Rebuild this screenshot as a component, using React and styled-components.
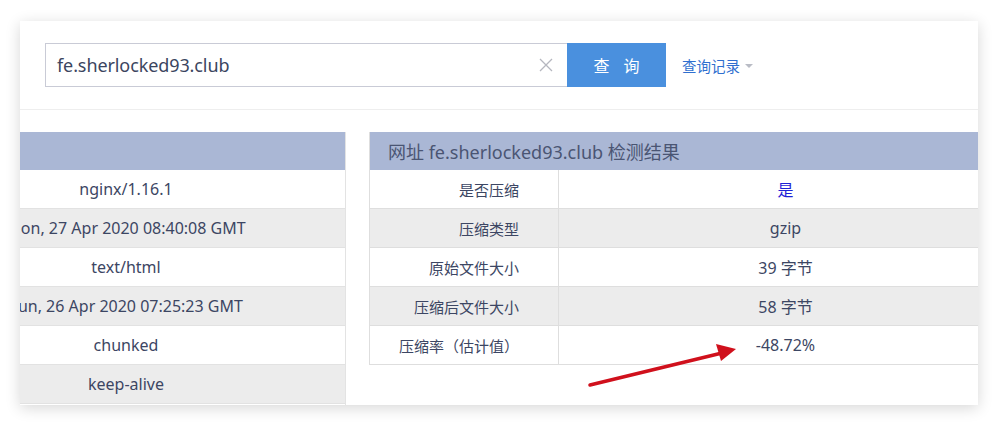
import React from "react";
import styled, { createGlobalStyle } from "styled-components";

const Global = createGlobalStyle`
  html, body { margin: 0; padding: 0; background: #fff; }
  body { font-family: "Noto Sans", "Noto Sans CJK SC", sans-serif; color: #3c4663; }
  * { box-sizing: border-box; }
`;

const Page = styled.div`
  position: relative;
  width: 998px;
  height: 426px;
  padding: 21px 20px;
`;

const Card = styled.div`
  width: 958px;
  height: 384px;
  background: #fff;
  box-shadow: 0 3px 14px rgba(0, 0, 0, 0.16);
  overflow: hidden;
  display: flex;
  flex-direction: column;
`;

const SearchBar = styled.div`
  display: flex;
  align-items: center;
  padding: 22px 25px 22px;
  border-bottom: 1px solid #eeeeee;
`;

const InputBox = styled.div`
  width: 522px;
  height: 44px;
  border: 1px solid #c9cbd6;
  border-right: none;
  display: flex;
  align-items: center;
  padding: 0 12px 0 11px;
  font-size: 18px;
  color: #3b4560;
`;

const InputText = styled.span`
  flex: 1;
  letter-spacing: -0.1px;
`;

const Clear = styled.span`
  width: 14px;
  height: 14px;
  margin-right: 2px;
  display: flex;
`;

const Button = styled.button`
  width: 99px;
  height: 44px;
  border: none;
  background: #4a90de;
  color: #fff;
  font-family: "Noto Sans CJK SC", sans-serif;
  font-size: 16px;
  letter-spacing: 14px;
  padding: 0 0 0 14px;
  display: flex;
  align-items: center;
  justify-content: center;
`;

const HistoryLink = styled.span`
  margin-left: 16px;
  color: #2f6fcf;
  font-family: "Noto Sans CJK SC", sans-serif;
  font-size: 14.5px;
  display: flex;
  align-items: center;
  gap: 5px;
`;

const Caret = styled.span`
  width: 0;
  height: 0;
  border-left: 4px solid transparent;
  border-right: 4px solid transparent;
  border-top: 4px solid #b9bcc5;
  margin-top: 1px;
`;

const Content = styled.div`
  display: flex;
  gap: 23px;
  padding-top: 22px;
  flex: 1;
  overflow: hidden;
`;

const LeftPanel = styled.div`
  flex: none;
  width: 326px;
  overflow: hidden;
  border-right: 1px solid #e3e3e3;
`;

const LeftInner = styled.div`
  width: 440px;
  margin-left: -114px;
`;

const HeaderBar = styled.div`
  height: 38px;
  background: #aab7d5;
  display: flex;
  align-items: center;
  padding-left: 18px;
  font-size: 18px;
  color: #4a5573;
`;

const Row = styled.div`
  height: 39px;
  display: flex;
  align-items: center;
  justify-content: center;
  font-size: 16px;
  white-space: nowrap;
  background: ${(p) => (p.$alt ? "#ececec" : "#fff")};
  border-bottom: 1px solid #e2e2e2;
`;

const RightPanel = styled.div`
  flex: none;
  width: 643px;
  border-left: 1px solid #dedede;
  align-self: flex-start;
`;

const TRow = styled.div`
  height: 39px;
  display: grid;
  grid-template-columns: 189px 1fr;
  background: ${(p) => (p.$alt ? "#ececec" : "#fff")};
  border-bottom: 1px solid #dedede;
`;

const Label = styled.div`
  display: flex;
  align-items: center;
  justify-content: flex-end;
  padding-right: 39px;
  font-size: 15px;
  border-right: 1px solid #dedede;
`;

const Value = styled.div`
  display: flex;
  align-items: center;
  justify-content: center;
  font-size: 16px;
  color: ${(p) => (p.$blue ? "#1f22d6" : "inherit")};
`;

const Arrow = styled.svg`
  position: absolute;
  left: 585px;
  top: 340px;
`;

const leftRows = [
  "nginx/1.16.1",
  "Mon, 27 Apr 2020 08:40:08 GMT",
  "text/html",
  "Sun, 26 Apr 2020 07:25:23 GMT",
  "chunked",
  "keep-alive",
];

const rightRows = [
  ["是否压缩", "是", true],
  ["压缩类型", "gzip"],
  ["原始文件大小", "39 字节"],
  ["压缩后文件大小", "58 字节"],
  ["压缩率（估计值）", "-48.72%"],
];

export default function App() {
  return (
    <Page>
      <Global />
      <Card>
        <SearchBar>
          <InputBox>
            <InputText>fe.sherlocked93.club</InputText>
            <Clear>
              <svg width="14" height="14" viewBox="0 0 14 14">
                <path d="M1 1L13 13M13 1L1 13" stroke="#b5b7bf" strokeWidth="1.3" fill="none" />
              </svg>
            </Clear>
          </InputBox>
          <Button>查询</Button>
          <HistoryLink>
            查询记录
            <Caret />
          </HistoryLink>
        </SearchBar>
        <Content>
          <LeftPanel>
            <LeftInner>
              <HeaderBar />
              {leftRows.map((r, i) => (
                <Row key={i} $alt={i % 2 === 1}>
                  {r}
                </Row>
              ))}
            </LeftInner>
          </LeftPanel>
          <RightPanel>
            <HeaderBar>网址 fe.sherlocked93.club 检测结果</HeaderBar>
            {rightRows.map(([l, v, blue], i) => (
              <TRow key={i} $alt={i % 2 === 1}>
                <Label>{l}</Label>
                <Value $blue={blue}>{v}</Value>
              </TRow>
            ))}
          </RightPanel>
        </Content>
      </Card>
      <Arrow width="160" height="50" viewBox="0 0 160 50">
        <line x1="5" y1="45" x2="137" y2="13" stroke="#d0101c" strokeWidth="3.5" strokeLinecap="round" />
        <polygon points="151,9 131,4 136,21" fill="#d0101c" />
      </Arrow>
    </Page>
  );
}
